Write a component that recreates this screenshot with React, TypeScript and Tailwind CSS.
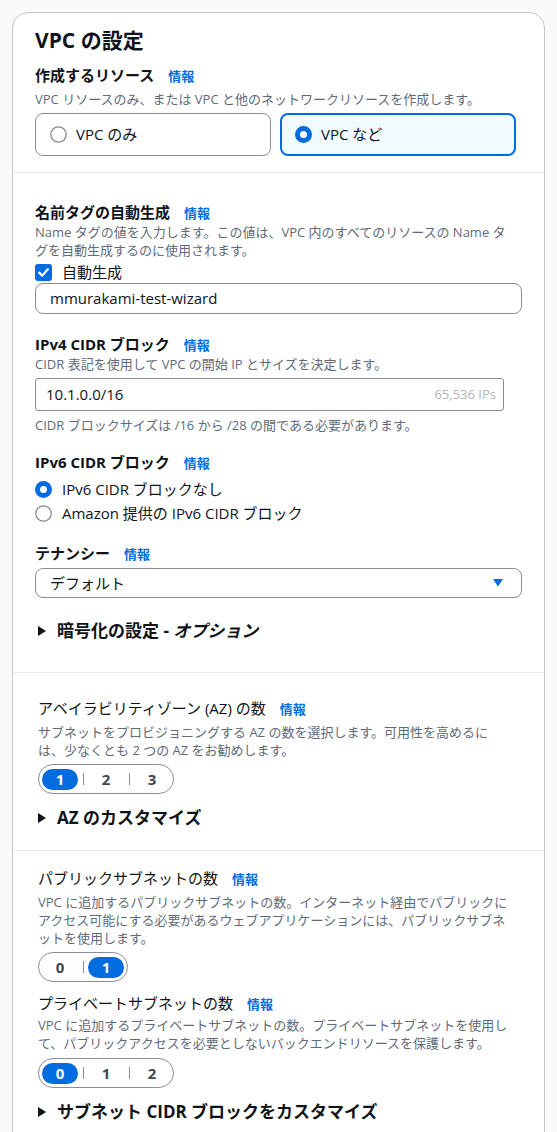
import type { ReactNode } from 'react'

const FONT = "font-['Open_Sans','Noto_Sans_CJK_JP',sans-serif]"

function Info() {
  return <span className="text-[13px] font-bold text-[#006ce0]">情報</span>
}

function Label({ children, bold = true }: { children: ReactNode; bold?: boolean }) {
  return (
    <div className="flex items-baseline gap-[14px] leading-[20px]">
      <span className={`text-[15px] text-[#0f141a] ${bold ? 'font-bold' : 'font-normal'}`}>{children}</span>
      <Info />
    </div>
  )
}

function Desc({ children, className = '' }: { children: ReactNode; className?: string }) {
  return <p className={`whitespace-nowrap text-[13px] leading-[18px] text-[#5f6b7a] ${className}`}>{children}</p>
}

function Radio({ checked }: { checked: boolean }) {
  return (
    <svg width="17" height="17" viewBox="0 0 17 17" aria-hidden="true" className="shrink-0">
      {checked ? (
        <circle cx="8.5" cy="8.5" r="6" fill="#ffffff" stroke="#006ce0" strokeWidth="5" />
      ) : (
        <circle cx="8.5" cy="8.5" r="7.7" fill="#ffffff" stroke="#8c8c94" strokeWidth="1.3" />
      )}
    </svg>
  )
}

function Expand({ children }: { children: ReactNode }) {
  return (
    <div className="flex items-center gap-[11px] pl-[3px] leading-[24px]">
      <svg width="8" height="10" viewBox="0 0 8 10" aria-hidden="true" className="shrink-0">
        <polygon points="0,0 8,5 0,10" fill="#0f141a" />
      </svg>
      <span className="text-[17px] font-bold text-[#0f141a]">{children}</span>
    </div>
  )
}

function Segmented({ options, selected }: { options: string[]; selected: string }) {
  return (
    <div className="inline-flex h-[30px] items-center rounded-full border border-[#8c8c94] px-[3px]">
      {options.map((o, i) => (
        <div key={o} className="flex items-center">
          {i > 0 && <span className="mx-[4.5px] h-[12px] w-px bg-[#8c8c94]" />}
          <span
            className={`flex h-[21px] w-[36px] items-center justify-center rounded-full text-[15px] font-bold ${
              o === selected ? 'bg-[#006ce0] text-white' : 'text-[#424650]'
            }`}
          >
            {o}
          </span>
        </div>
      ))}
    </div>
  )
}

export default function App() {
  return (
    <div className={`min-h-screen bg-[#fafafa] px-3 pt-3 ${FONT}`}>
      <div className="rounded-2xl border border-[#c6c6cd] bg-white">
        {/* リソース */}
        <section className="border-b border-[#ebebf0] px-[22px] pb-[16px] pt-[13px]">
          <h2 className="text-[21px] font-bold leading-[28px] text-[#0f141a]">VPC の設定</h2>
          <div className="mt-[11px]">
            <Label>作成するリソース</Label>
          </div>
          <Desc className="mt-[4px]">VPC リソースのみ、または VPC と他のネットワークリソースを作成します。</Desc>
          <div className="mt-[5px] grid w-[481px] grid-cols-2 gap-[9px]">
            <div className="flex h-[43px] items-center gap-[9px] rounded-[8px] border border-[#8c8c94] pl-[14px]">
              <Radio checked={false} />
              <span className="text-[15px] text-[#0f141a]">VPC のみ</span>
            </div>
            <div className="flex h-[43px] items-center gap-[9px] rounded-[8px] border-2 border-[#006ce0] bg-[#f0fbff] pl-[13px]">
              <Radio checked />
              <span className="text-[15px] text-[#0f141a]">VPC など</span>
            </div>
          </div>
        </section>

        {/* 名前タグ / CIDR */}
        <section className="border-b border-[#ebebf0] px-[22px] pb-[29px] pt-[29px]">
          <Label>名前タグの自動生成</Label>
          <Desc>
            Name タグの値を入力します。この値は、VPC 内のすべてのリソースの Name タ
            <br />
            グを自動生成するのに使用されます。
          </Desc>
          <label className="mt-[2px] flex items-center gap-[10px] leading-[22px]">
            <span className="flex h-[17px] w-[17px] items-center justify-center rounded-[3px] bg-[#006ce0]">
              <svg width="11" height="9" viewBox="0 0 11 9" fill="none" aria-hidden="true">
                <path d="M1.2 4.6l3 3 5.6-6.4" stroke="#ffffff" strokeWidth="2.2" strokeLinecap="round" strokeLinejoin="round" />
              </svg>
            </span>
            <span className="text-[15px] text-[#0f141a]">自動生成</span>
          </label>
          <div className="flex h-[31px] items-center rounded-[8px] border border-[#8c8c94] px-[14px] text-[15px] text-[#0f141a]">
            mmurakami-test-wizard
          </div>

          <div className="mt-[20px]">
            <Label>IPv4 CIDR ブロック</Label>
          </div>
          <Desc>CIDR 表記を使用して VPC の開始 IP とサイズを決定します。</Desc>
          <div className="mt-[5px] flex h-[33px] w-[469px] items-center justify-between rounded-[3px] border border-[#8c8c94] pl-[10px] pr-[7px]">
            <span className="text-[15px] text-[#0f141a]">10.1.0.0/16</span>
            <span className="text-[13px] text-[#b4b4bb]">65,536 IPs</span>
          </div>
          <Desc className="mt-[5px]">CIDR ブロックサイズは /16 から /28 の間である必要があります。</Desc>

          <div className="mt-[18px]">
            <Label>IPv6 CIDR ブロック</Label>
          </div>
          <div className="mt-[4px] flex flex-col">
            <div className="flex items-center gap-[10px] leading-[24px]">
              <Radio checked />
              <span className="text-[15px] text-[#0f141a]">IPv6 CIDR ブロックなし</span>
            </div>
            <div className="flex items-center gap-[10px] leading-[24px]">
              <Radio checked={false} />
              <span className="text-[15px] text-[#0f141a]">Amazon 提供の IPv6 CIDR ブロック</span>
            </div>
          </div>

          <div className="mt-[18px]">
            <Label>テナンシー</Label>
          </div>
          <div className="mt-[4px] flex h-[30px] items-center justify-between rounded-[8px] border border-[#8c8c94] pl-[14px] pr-[18px]">
            <span className="text-[15px] text-[#0f141a]">デフォルト</span>
            <svg width="10" height="8" viewBox="0 0 10 8" aria-hidden="true">
              <polygon points="0,0 10,0 5,7.5" fill="#006ce0" />
            </svg>
          </div>

          <div className="mt-[21px]">
            <Expand>
              暗号化の設定 - <em className="italic">オプション</em>
            </Expand>
          </div>
        </section>

        {/* AZ */}
        <section className="border-b border-[#ebebf0] pb-[20px] pl-[22px] pr-[22px] pt-[25px]">
          <div className="pl-[3px]">
            <Label bold={false}>アベイラビリティゾーン (AZ) の数</Label>
            <Desc className="mt-[4px]">
              サブネットをプロビジョニングする AZ の数を選択します。可用性を高めるに
              <br />
              は、少なくとも 2 つの AZ をお勧めします。
            </Desc>
            <div className="mt-[5px]">
              <Segmented options={['1', '2', '3']} selected="1" />
            </div>
          </div>
          <div className="mt-[12px]">
            <Expand>AZ のカスタマイズ</Expand>
          </div>
        </section>

        {/* サブネット */}
        <section className="pb-[24px] pl-[22px] pr-[22px] pt-[17px]">
          <div className="pl-[3px]">
            <Label bold={false}>パブリックサブネットの数</Label>
            <Desc className="mt-[4px]">
              VPC に追加するパブリックサブネットの数。インターネット経由でパブリックに
              <br />
              アクセス可能にする必要があるウェブアプリケーションには、パブリックサブネ
              <br />
              ットを使用します。
            </Desc>
            <div className="mt-[5px]">
              <Segmented options={['0', '1']} selected="1" />
            </div>

            <div className="mt-[11px]">
              <Label bold={false}>プライベートサブネットの数</Label>
            </div>
            <Desc className="mt-[2px]">
              VPC に追加するプライベートサブネットの数。プライベートサブネットを使用し
              <br />
              て、パブリックアクセスを必要としないバックエンドリソースを保護します。
            </Desc>
            <div className="mt-[6px]">
              <Segmented options={['0', '1', '2']} selected="0" />
            </div>
          </div>
          <div className="mt-[12px]">
            <Expand>サブネット CIDR ブロックをカスタマイズ</Expand>
          </div>
        </section>
      </div>
    </div>
  )
}
